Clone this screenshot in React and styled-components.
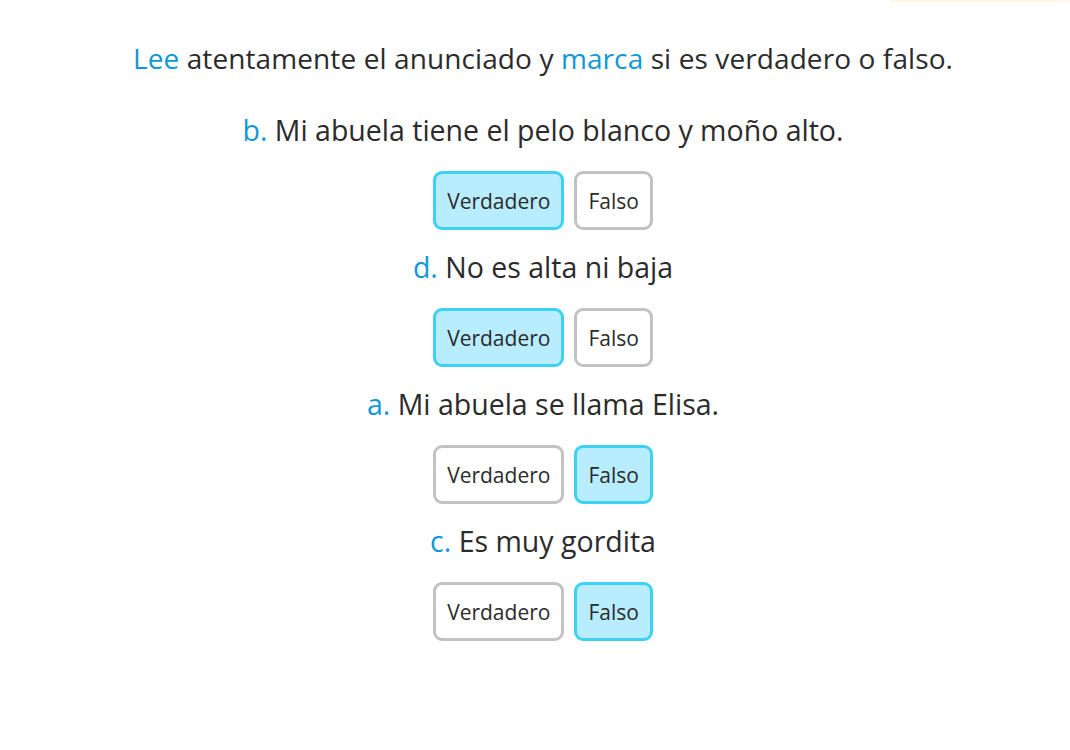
import React, { useState } from 'react'
import styled, { createGlobalStyle } from 'styled-components'

const GlobalStyle = createGlobalStyle`
   body {
      margin: 0;
      background: #ffffff;
      font-family: 'Open Sans', 'Noto Sans', sans-serif;
      color: #2b2b2b;
   }
`

const QUESTIONS = [
   { letter: 'b.', text: 'Mi abuela tiene el pelo blanco y moño alto.', answer: true },
   { letter: 'd.', text: 'No es alta ni baja', answer: true },
   { letter: 'a.', text: 'Mi abuela se llama Elisa.', answer: false },
   { letter: 'c.', text: 'Es muy gordita', answer: false },
]

export default function App() {
   const [answers, setAnswers] = useState(QUESTIONS.map((q) => q.answer))

   const choose = (index, value) => {
      setAnswers((prev) => prev.map((a, i) => (i === index ? value : a)))
   }

   return (
      <Page>
         <GlobalStyle />
         <TopLine />
         <Instruction>
            <Accent>Lee</Accent> atentamente el anunciado y <Accent>marca</Accent> si es
            verdadero o falso.
         </Instruction>
         <List>
            {QUESTIONS.map((q, i) => (
               <Question key={q.letter}>
                  <Statement>
                     <Accent>{q.letter}</Accent> {q.text}
                  </Statement>
                  <Choices>
                     <Choice active={answers[i] === true} onClick={() => choose(i, true)}>
                        Verdadero
                     </Choice>
                     <Choice active={answers[i] === false} onClick={() => choose(i, false)}>
                        Falso
                     </Choice>
                  </Choices>
               </Question>
            ))}
         </List>
      </Page>
   )
}

const Page = styled.div`
   box-sizing: border-box;
   width: 1070px;
   height: 750px;
   padding-left: 16px;
   display: flex;
   flex-direction: column;
   align-items: center;
   position: relative;
`

const TopLine = styled.div`
   position: absolute;
   top: 0;
   right: 0;
   width: 180px;
   height: 2px;
   background: #fdf6e6;
`

const Instruction = styled.p`
   margin: 39px 0 0;
   font-size: 28px;
   line-height: 38px;
   text-align: center;
   letter-spacing: 0.1px;
`

const Accent = styled.span`
   color: #0f98d8;
`

const List = styled.div`
   margin-top: 34px;
   display: flex;
   flex-direction: column;
   align-items: center;
   gap: 18px;
`

const Question = styled.div`
   display: flex;
   flex-direction: column;
   align-items: center;
`

const Statement = styled.p`
   margin: 0;
   font-size: 28.5px;
   line-height: 38px;
   text-align: center;
`

const Choices = styled.div`
   margin-top: 22px;
   display: flex;
   gap: 10px;
`

const Choice = styled.button`
   height: 59px;
   padding: 0 11px;
   border-radius: 9px;
   border: 3px solid ${({ active }) => (active ? '#3dd2f3' : '#c2c2c2')};
   background: ${({ active }) => (active ? '#b8ecff' : '#ffffff')};
   color: #2b2b2b;
   font-family: 'Open Sans', 'Noto Sans', sans-serif;
   font-size: 21px;
   cursor: pointer;
`
